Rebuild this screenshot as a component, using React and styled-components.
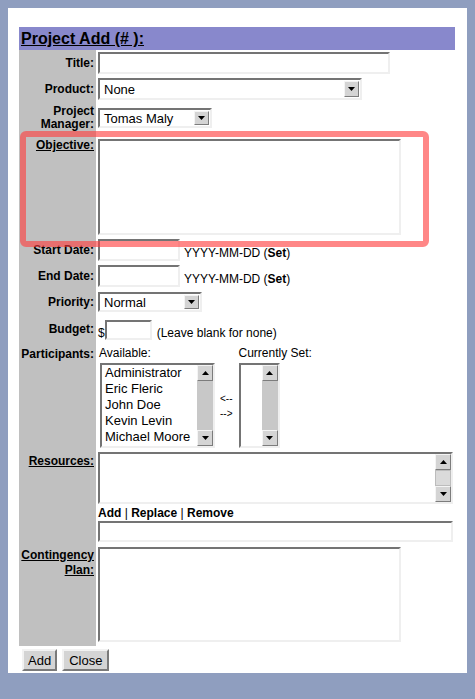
import React from "react";
import styled, { createGlobalStyle } from "styled-components";

//Styles
const GlobalStyle = createGlobalStyle`
  html, body {
    background: #8f9ebf;
  }
  body {
    margin: 8px;
    font-family: "Liberation Sans", Arial, sans-serif;
    font-size: 12px;
    color: #000;
  }
`;

const Panel = styled.div`
  position: relative;
  background: #fff;
  padding: 19px 12px 2px 11px;
`;

const Form = styled.div`
  width: 436px;
`;

const Header = styled.div`
  height: 23px;
  line-height: 23px;
  padding-left: 2px;
  background: #8888cc;
  font-size: 16px;
  font-weight: bold;
  text-decoration: underline;
`;

const Grid = styled.div`
  display: grid;
  grid-template-columns: 77px 1fr;
  column-gap: 2px;
`;

const Label = styled.div`
  display: flex;
  justify-content: flex-end;
  align-items: ${({ $top }) => ($top ? "flex-start" : "center")};
  padding: ${({ $top }) => ($top ? "4px 2px 0 0" : "3px 2px 3px 0")};
  background: #c0c0c0;
  font-weight: bold;
  text-align: right;
  line-height: ${({ $lh }) => $lh || 14}px;
`;

const Link = styled.span`
  text-decoration: underline;
`;

const Field = styled.div`
  display: flex;
  align-items: ${({ $align }) => $align || "center"};
  min-height: 22px;
  padding: ${({ $pad }) => $pad || "2px 0"};
`;

const inset = `
  box-sizing: border-box;
  border: 2px solid;
  border-color: #747474 #efefef #efefef #747474;
  background: #fff;
`;

const Input = styled.input`
  ${inset}
  width: ${({ $w }) => $w}px;
  height: ${({ $h }) => $h || 22}px;
  margin: 0;
  padding: 0 2px;
  font: 13px "Liberation Sans", Arial, sans-serif;
`;

const TextArea = styled.textarea`
  ${inset}
  display: block;
  width: ${({ $w }) => $w}px;
  height: ${({ $h }) => $h}px;
  margin: 0;
  padding: 2px;
  resize: none;
  font: 13px "Liberation Sans", Arial, sans-serif;
`;

const SelectBox = styled.div`
  ${inset}
  display: flex;
  width: ${({ $w }) => $w}px;
  height: ${({ $h }) => $h || 22}px;
  font-size: 13px;
`;

const SelectValue = styled.div`
  flex: 1;
  padding-left: 4px;
  display: flex;
  align-items: center;
`;

const ArrowButton = styled.div`
  box-sizing: border-box;
  width: ${({ $w }) => $w || 15}px;
  height: ${({ $h }) => $h || "auto"};
  margin: ${({ $m }) => $m || "1px"};
  display: flex;
  align-items: center;
  justify-content: center;
  background: #d4d4d4;
  border: 1px solid;
  border-color: #f4f4f4 #7c7c7c #7c7c7c #f4f4f4;
`;

const Hint = styled.span`
  margin: 0 0 ${({ $mb }) => $mb ?? 1}px ${({ $ml }) => $ml || 0}px;
  line-height: 14px;
  white-space: nowrap;
`;

const Column = styled.div`
  display: flex;
  flex-direction: column;
  margin-left: ${({ $ml }) => $ml || 0}px;
`;

const Caption = styled.div`
  line-height: 16px;
  padding-left: ${({ $pl }) => $pl || 0}px;
`;

const ListBox = styled.div`
  ${inset}
  display: flex;
  width: ${({ $w }) => $w}px;
  height: ${({ $h }) => $h}px;
  margin: ${({ $m }) => $m || "2px 0 0 0"};
`;

const Items = styled.div`
  flex: 1;
  padding: 0 0 0 3px;
  font-size: 13px;
  line-height: 16px;
  white-space: nowrap;
  overflow: hidden;
`;

const ScrollBar = styled.div`
  width: 16px;
  display: flex;
  flex-direction: column;
`;

const Track = styled.div`
  flex: 1;
  background: ${({ $light }) => ($light ? "#dadada" : "#c8c8c8")};
  border: ${({ $light }) => ($light ? "1px solid #bcbcbc" : "none")};
`;

const Arrows = styled.div`
  display: flex;
  flex-direction: column;
  margin: 46px 0 0 5px;
  font-size: 10px;
  line-height: 15px;
`;

const Stack = styled.div`
  display: flex;
  flex-direction: column;
  align-items: flex-start;
`;

const Links = styled.div`
  margin: 3px 0 1px;
  line-height: 13px;
  font-weight: bold;

  span {
    font-weight: normal;
  }
`;

const Actions = styled.div`
  display: flex;
  gap: 5px;
  margin: 3px 0 0 3px;
`;

const Button = styled.button`
  box-sizing: border-box;
  height: 22px;
  margin: 0;
  padding: 0 ${({ $px }) => $px || 4}px;
  background: #d4d4d4;
  border: 2px solid;
  border-color: #f2f2f2 #7a7a7a #7a7a7a #f2f2f2;
  font: 13px "Liberation Sans", Arial, sans-serif;
  color: #000;
`;

const Highlight = styled.div`
  position: absolute;
  left: 12px;
  top: 123px;
  width: 409px;
  height: 116px;
  box-sizing: border-box;
  border: 6px solid rgba(255, 62, 62, 0.62);
  border-radius: 6px;
  pointer-events: none;
`;

//Parts
const Triangle = ({ up }) => (
  <svg width="7" height="4" viewBox="0 0 7 4">
    <polygon points={up ? "3.5,0 7,4 0,4" : "0,0 7,0 3.5,4"} fill="#000" />
  </svg>
);

const Select = ({ value, width, height }) => (
  <SelectBox $w={width} $h={height}>
    <SelectValue>{value}</SelectValue>
    <ArrowButton>
      <Triangle />
    </ArrowButton>
  </SelectBox>
);

const Scroll = ({ light }) => (
  <ScrollBar>
    <ArrowButton $w={16} $h="16px" $m="0">
      <Triangle up />
    </ArrowButton>
    <Track $light={light} />
    <ArrowButton $w={16} $h="16px" $m="0">
      <Triangle />
    </ArrowButton>
  </ScrollBar>
);

const people = [
  "Administrator",
  "Eric Fleric",
  "John Doe",
  "Kevin Levin",
  "Michael Moore",
];

const App = () => (
  <>
    <GlobalStyle />
    <Panel>
      <Form>
        <Header>Project Add (# ):</Header>
        <Grid>
          <Label>Title:</Label>
          <Field>
            <Input $w={292} />
          </Field>

          <Label>Product:</Label>
          <Field>
            <Select value="None" width={264} />
          </Field>

          <Label $lh={13}>
            Project
            <br />
            Manager:
          </Label>
          <Field>
            <Select value="Tomas Maly" width={114} height={20} />
          </Field>

          <Label $top>
            <Link>Objective:</Link>
          </Label>
          <Field $align="flex-start" $pad="5px 0 2px">
            <TextArea $w={303} $h={96} />
          </Field>

          <Label>Start Date:</Label>
          <Field $align="flex-end">
            <Input $w={82} />
            <Hint $ml={4}>
              YYYY-MM-DD (<b>Set</b>)
            </Hint>
          </Field>

          <Label>End Date:</Label>
          <Field $align="flex-end">
            <Input $w={82} />
            <Hint $ml={4}>
              YYYY-MM-DD (<b>Set</b>)
            </Hint>
          </Field>

          <Label>Priority:</Label>
          <Field>
            <Select value="Normal" width={104} height={20} />
          </Field>

          <Label>Budget:</Label>
          <Field $align="flex-end" $pad="3px 0">
            <Hint $mb={0}>$</Hint>
            <Input $w={47} $h={20} />
            <Hint $mb={0} $ml={5}>
              (Leave blank for none)
            </Hint>
          </Field>

          <Label $top>Participants:</Label>
          <Field $align="flex-start">
            <Column>
              <Caption $pl={1}>Available:</Caption>
              <ListBox $w={115} $h={85} $m="2px 0 0 2px">
                <Items>
                  {people.map((name) => (
                    <div key={name}>{name}</div>
                  ))}
                </Items>
                <Scroll />
              </ListBox>
            </Column>
            <Arrows>
              <span>&lt;--</span>
              <span>--&gt;</span>
            </Arrows>
            <Column $ml={6}>
              <Caption>Currently Set:</Caption>
              <ListBox $w={41} $h={85}>
                <Items />
                <Scroll />
              </ListBox>
            </Column>
          </Field>

          <Label $top>
            <Link>Resources:</Link>
          </Label>
          <Field $align="flex-start">
            <Stack>
              <ListBox $w={355} $h={52} $m="0">
                <Items />
                <Scroll light />
              </ListBox>
              <Links>
                Add <span>|</span> Replace <span>|</span> Remove
              </Links>
              <Input $w={355} $h={21} />
            </Stack>
          </Field>

          <Label $top $lh={15}>
            <Link>
              Contingency
              <br />
              Plan:
            </Link>
          </Label>
          <Field $align="flex-start" $pad="3px 0 4px">
            <TextArea $w={303} $h={95} />
          </Field>
        </Grid>
        <Actions>
          <Button>Add</Button>
          <Button $px={5}>Close</Button>
        </Actions>
      </Form>
      <Highlight />
    </Panel>
  </>
);

export default App;
